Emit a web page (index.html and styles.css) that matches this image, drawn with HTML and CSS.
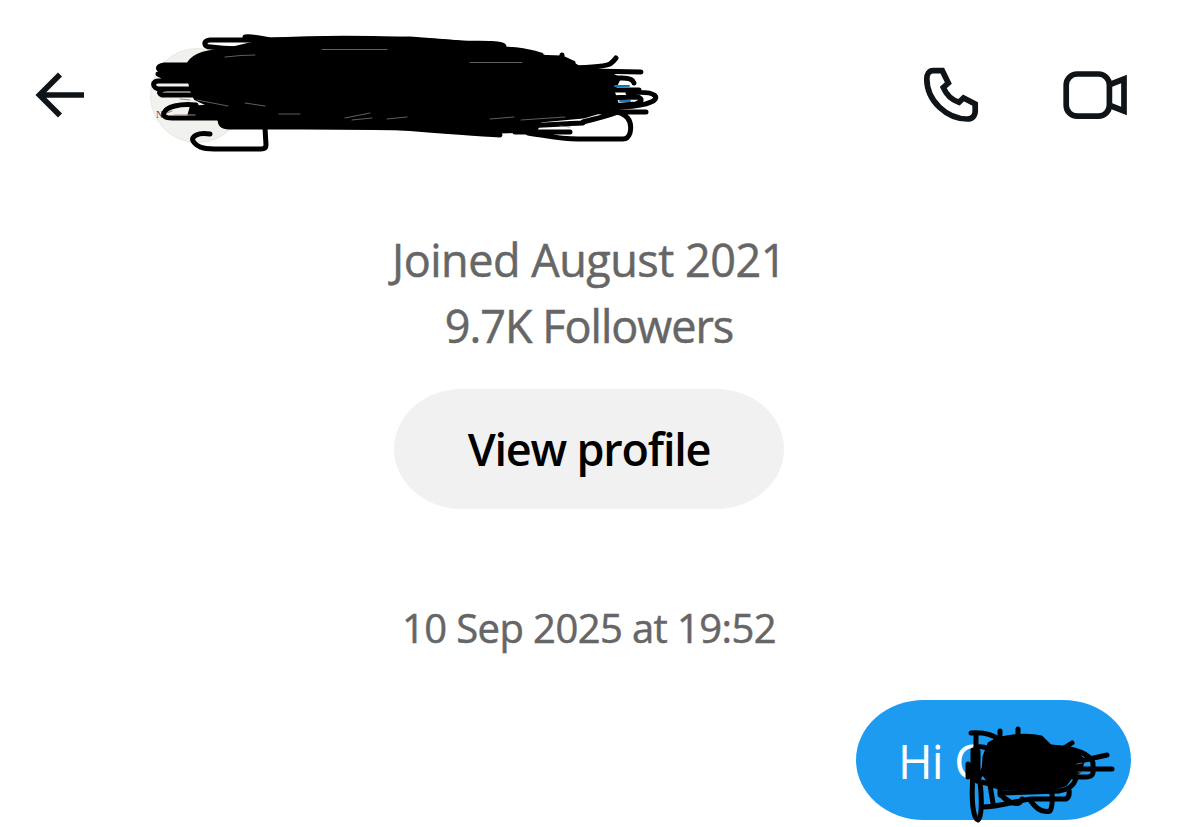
FILE: index.html
```html
<!DOCTYPE html>
<html lang="en">
<head>
    <meta charset="UTF-8">
    <meta name="viewport" content="width=device-width, initial-scale=1.0">
    <title>Messages</title>
    <link rel="stylesheet" href="styles.css">
</head>
<body>

    <header class="header">
        <svg class="icon back" viewBox="30 65 60 60">
            <path d="M84 95H39M60 74.500L39.500 95L60 115.500" />
        </svg>

        <div class="person">
            <div class="avatar"><span class="avatar-text">N</span></div>
            <svg class="scribble" viewBox="140 20 530 140">
                <path class="blob" d="M192 63L205 55L225 50L250 44L273 39L410 38L500 45L503 50L543 56L572 63L580 68L605 71L618 78L612 90L616 102L615 106L600 110L583 115L540 119L535 129L497 130L410 127L267 125L223 121L222 117L190 114L192 107L215 106L196 97L192 88L190 78L188 70Z" />
                <path d="M245 36C255 35 262 38 272 39H210C202 40 204 46 211 46C225 48 240 48 252 47M272 39C330 36 400 37 460 42C485 42 505 42 504 46C500 50 450 47 430 46M500 48C520 48 530 51 541 54M470 54L562 57L573 62L530 63M562 54V57M560 67C595 67 605 65 610 63Q614 60 616 57" />
                <path d="M189 63C195 53 209 51 225 50M200 64H164C157 65 157 69 162 69H200M200 73H158L166 77H200M196 80H160C151 79 152 88 160 88H200M200 94H162C157 92 160 88 168 88M196 104C180 102 166 106 164 112Q162 117 172 117H225M220 118C220 124 224 126 229 126H390C440 130 480 133 500 134" />
                <path d="M210 133C197 131 191 136 193 140C198 148 207 148 220 148H261Q266 148 266 144L265 127" />
                <path d="M590 70L641 71M600 77L622 77Q633 77 634 82M605 89H639M628 92C660 89 659 98 651 101C636 108 618 104 605 108M605 97L638 96Q645 99 636 103L610 105M600 111H646M613 110C626 112 633 119 630 132Q628 138 623 138H578C561 138 548 135 528 132M515 131H570M583 122C550 123 515 127 500 123M583 121C598 117 609 115 620 110" />
                <path class="gap" d="M225 56Q242 54 255 54M322 48.500H387M470 61.500H522M197 99L228 105M245 102L265 105M279 113H300M345 117L370 112M352 119L372 117M387 118L407 116M490 118L514 116M521 119L565 116M560 125L570 126" />
                <path class="red" d="M180 98L190 99M167 112L172 110M174 114H195" />
                <path class="blue" d="M615 85L629 85M620 100L630 100" />
            </svg>
        </div>

        <div class="actions">
            <svg class="icon" viewBox="920 65 60 60">
                <path d="M933.300 70.700H942.300L948.300 83L943.300 87.500C946 94 952 100 959 102.300L963.500 98L975.200 104V111C975.200 116 972 119 967.500 119C947 119 926.800 101 926.800 79C926.800 74 929 70.700 933.300 70.700Z" />
            </svg>
            <svg class="icon video" viewBox="1060 65 70 60">
                <rect x="1066.200" y="74" width="43.200" height="42.200" rx="11" />
                <path d="M1110 84.500L1124 79V111L1110 105.500" />
            </svg>
        </div>
    </header>

    <main class="chat">
        <p class="info joined">Joined August 2021</p>
        <p class="info followers">9.7K Followers</p>
        <button class="profile-button">View profile</button>
        <p class="date">10 Sep 2025 at 19:52</p>

        <div class="bubble">
            Hi C
            <svg class="bubble-scribble" viewBox="840 690 310 137">
                <path class="blob" d="M990 744L998 740L1018 738L1040 740L1050 747L1073 750L1082 760L1080 770L1070 777L1065 784L1053 788L1003 788L992 785L984 773L985 757Z" />
                <path d="M971 733C985 732 993 735 998 739M976 736V777M973 750V780M968 764V777M978 751V778M1000 731V742M1018 729V745M990 745C1000 735 1030 735 1041 738L1050 747M1050 747C1072 748 1090 753 1093 763V773Q1092 777 1086 777H1073M1064 748L1072 743M1076 762L1107 755M1070 769H1112" />
                <path d="M973 775C971 800 973 819 978 820C982 817 982 798 980 782M976 747C984 746 989 748 992 752M985 767L977 781L990 784M990 785L993 803M982 807C1000 807 1018 800 1032 799H1066Q1070 797 1069 790M1000 788V795L1009 801M1004 798C1011 804 1020 806 1022 799M1030 800C1036 809 1043 813 1050 811Q1053 806 1052 793M1000 793L1060 791M1076 778Q1073 790 1057 791" />
                <path class="gap" d="M1077 764L1082 763M1078 772L1083 772" />
            </svg>
        </div>
    </main>

</body>
</html>
```

FILE: styles.css
```css
* {
    box-sizing: border-box;
}

body {
    margin: 0;
    background-color: #fff;
    font-family: "Open Sans", sans-serif;
    height: 827px;
    overflow: hidden;
}

p {
    margin: 0;
}

.header {
    display: flex;
    align-items: center;
    height: 190px;
    padding: 0 49px 0 30px;
}

.icon {
    width: 60px;
    height: 60px;
    fill: none;
    stroke: #0f1419;
    stroke-width: 5.7px;
}

.icon.video {
    width: 70px;
}

.icon.back {
    margin-right: 60px;
}

.person {
    position: relative;
}

.avatar {
    width: 95px;
    height: 95px;
    border: 1px solid #e8e8e3;
    border-radius: 50%;
    background-color: #f1f2ed;
    padding: 59px 0 0 5px;
}

.avatar-text {
    display: block;
    font: 10px/14px "Liberation Serif", serif;
    color: #8b3036;
}

.scribble {
    position: absolute;
    left: -10px;
    top: -27px;
    width: 530px;
    height: 140px;
}

.scribble path,
.bubble-scribble path {
    fill: none;
    stroke: #000;
    stroke-width: 5px;
    stroke-linecap: round;
    stroke-linejoin: round;
}

.scribble .blob,
.bubble-scribble .blob {
    fill: #000;
}

.scribble .gap,
.bubble-scribble .gap {
    stroke: #777;
    stroke-width: 0.8px;
}

.scribble .red {
    stroke: #a98084;
    stroke-width: 1px;
}

.scribble .blue {
    stroke: #1677bd;
    stroke-width: 2px;
}

.actions {
    display: flex;
    gap: 80px;
    margin-left: auto;
}

.chat {
    display: flex;
    flex-direction: column;
    align-items: center;
    padding: 37px 48px 0 47px;
}

.info,
.date {
    color: #666;
    white-space: nowrap;
    -webkit-text-stroke: 0.5px #666;
}

.info {
    font-size: 45px;
    line-height: 66px;
}

.joined {
    letter-spacing: -0.5px;
}

.followers {
    letter-spacing: -1px;
}

.profile-button {
    width: 390px;
    height: 120px;
    margin-top: 30px;
    padding-bottom: 3px;
    border: none;
    border-radius: 68px / 60px;
    background-color: #f1f1f1;
    color: #000;
    font-family: "Open Sans", sans-serif;
    font-size: 45px;
    font-weight: 600;
    letter-spacing: -1.2px;
    cursor: pointer;
}

.date {
    margin-top: 89px;
    font-size: 40px;
    line-height: 60px;
    letter-spacing: -0.6px;
}

.bubble {
    position: relative;
    align-self: flex-end;
    width: 275px;
    height: 120px;
    margin-top: 42px;
    padding-left: 42px;
    border-radius: 68px / 60px;
    background-color: #1d9bf0;
    color: #fff;
    font-size: 47px;
    line-height: 122px;
    letter-spacing: -0.8px;
}

.bubble-scribble {
    position: absolute;
    left: -16px;
    top: -10px;
    width: 310px;
    height: 137px;
}
```
